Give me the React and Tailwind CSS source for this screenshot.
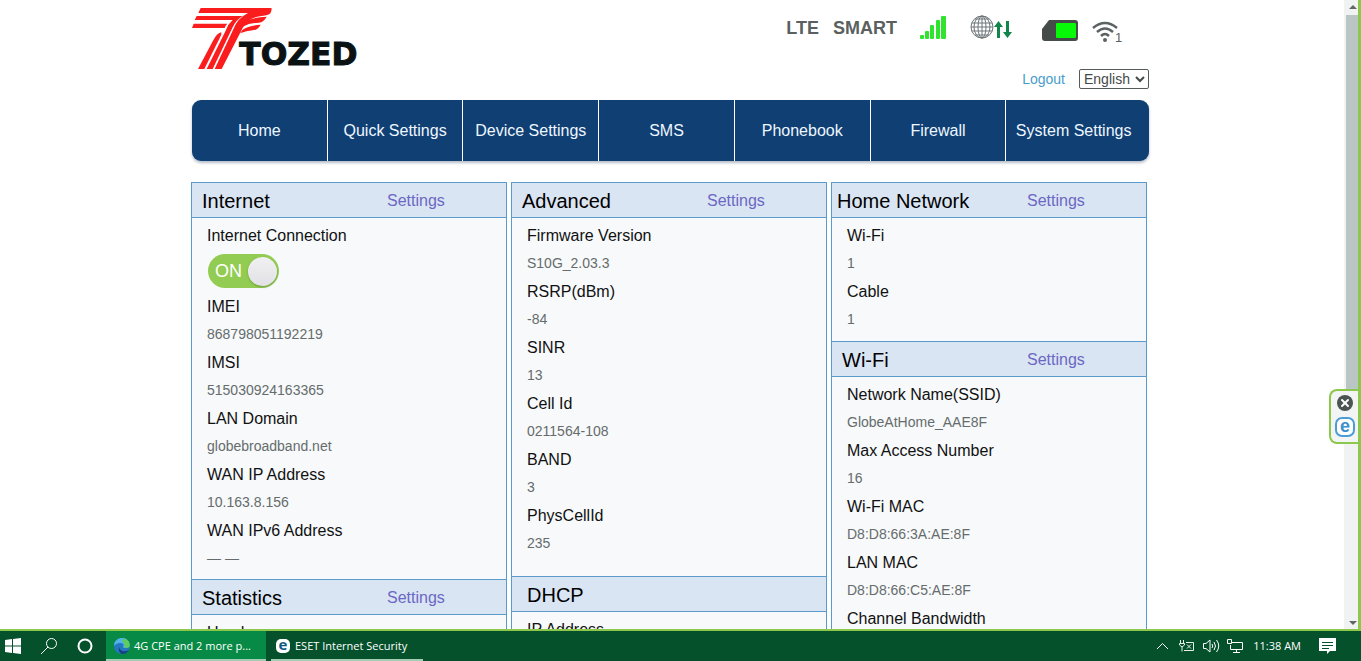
import { useState } from "react";
import { X } from "lucide-react";

const menu = ["Home", "Quick Settings", "Device Settings", "SMS", "Phonebook", "Firewall", "System Settings"];

const internet = [
  ["IMEI", "868798051192219"],
  ["IMSI", "515030924163365"],
  ["LAN Domain", "globebroadband.net"],
  ["WAN IP Address", "10.163.8.156"],
  ["WAN IPv6 Address", "— —"],
];

const advanced = [
  ["Firmware Version", "S10G_2.03.3"],
  ["RSRP(dBm)", "-84"],
  ["SINR", "13"],
  ["Cell Id", "0211564-108"],
  ["BAND", "3"],
  ["PhysCellId", "235"],
];

const homeNetwork = [
  ["Wi-Fi", "1"],
  ["Cable", "1"],
];

const wifi = [
  ["Network Name(SSID)", "GlobeAtHome_AAE8F"],
  ["Max Access Number", "16"],
  ["Wi-Fi MAC", "D8:D8:66:3A:AE:8F"],
  ["LAN MAC", "D8:D8:66:C5:AE:8F"],
  ["Channel Bandwidth"],
];

function Logo() {
  return (
    <svg viewBox="33 18 516 192" className="mt-[6px] h-16 w-[172px]" role="img" aria-label="Tozed">
      <g fill="#fb1d1d">
        <path d="M62 24H274Q276 26 273 36Q270 46 250 47Q205 50 188 84L125 207H104L160 88Q172 55 204 39H55Z" />
        <path d="M50 48H188Q168 60 158 82L98 207H80L138 90Q144 72 158 60H44Z" />
        <path d="M41 71H142Q136 76 134 84H36Z" />
        <path d="M124 97Q112 98 99 122L54 207H73L124 104Z" />
        <path d="M198 62Q225 52 260 50Q252 66 236 68Q208 69 188 80Q190 70 198 62Z" />
        <path d="M188 89Q205 77 242 74Q234 89 222 90Q198 92 180 100Z" />
      </g>
      <text x="178" y="196" fontFamily="'DejaVu Sans', sans-serif" fontWeight="700" fontSize="94" fill="#0b1214" stroke="#0b1214" strokeWidth="3">
        TOZED
      </text>
    </svg>
  );
}

function SignalIcon() {
  return (
    <svg viewBox="0 0 26 30" className="h-[30px] w-[26px]" fill="#2fe32f">
      <rect x="0" y="21" width="4" height="4" rx="1" />
      <rect x="5" y="17" width="4" height="8" rx="1" />
      <rect x="10" y="11" width="4" height="14" rx="1" />
      <rect x="16" y="6" width="4" height="19" rx="1" />
      <rect x="21" y="2" width="5" height="23" rx="1" />
    </svg>
  );
}

function GlobeIcon() {
  return (
    <svg viewBox="0 0 42 30" className="h-[30px] w-[42px]" fill="none">
      <g stroke="#6c7478">
        <circle cx="12" cy="13" r="11" />
        <ellipse cx="12" cy="13" rx="8" ry="11" />
        <ellipse cx="12" cy="13" rx="4" ry="11" />
        <path d="M12 2V24M1 13H23M2 9H22M2 17H22M5 5H19M5 21H19" />
      </g>
      <g fill="#12854a">
        <path d="M28.500 7L33 13H30V24H27V13H24Z" />
        <path d="M37.500 24L42 18H39V7H36V18H33Z" />
      </g>
    </svg>
  );
}

function SimIcon() {
  return (
    <svg viewBox="0 0 36 30" className="h-[30px] w-9">
      <path d="M7 6H33Q36 6 36 9V24Q36 27 33 27H3Q0 27 0 24V15Z" fill="#454b49" />
      <rect x="14" y="9" width="20" height="15" rx="1" fill="#06f906" />
    </svg>
  );
}

function WifiIcon() {
  return (
    <svg viewBox="0 0 31 30" className="h-[30px] w-[31px]" fill="none">
      <g stroke="#5b6262" strokeWidth="2.500">
        <path d="M1 14Q13 4 25 14" />
        <path d="M5 18Q13 11 21 18" />
        <path d="M9 22Q13 18 17 22" />
      </g>
      <circle cx="13" cy="26" r="2" fill="#5b6262" />
      <text x="23" y="28" fontSize="13" fontFamily="'Liberation Sans', Arial, sans-serif" fill="#5b6262">1</text>
    </svg>
  );
}

function PanelHeader({ title, indent = "pl-[10px]", link = true }) {
  return (
    <div className="flex h-9 items-center border-y border-[#5b9bcb] bg-[#dae5f3] pt-[2px]">
      <h2 className={`w-[195px] shrink-0 text-[20px] text-black ${indent}`}>{title}</h2>
      {link && (
        <a href="#settings" className="text-base text-[#6a68c4]">
          Settings
        </a>
      )}
    </div>
  );
}

function Rows({ items }) {
  return (
    <dl className="px-[15px]">
      {items.map(([label, value]) => (
        <div key={label}>
          <dt className="pt-[2px] text-base leading-[26px] text-[#111]">{label}</dt>
          {value && <dd className="text-sm leading-7 text-[#666c6c]">{value}</dd>}
        </div>
      ))}
    </dl>
  );
}

function StatusBar() {
  return (
    <div className="mt-[14px] flex items-start pr-[26px]">
      <span className="text-[18px] font-bold leading-7 text-[#5a6060]">LTE</span>
      <span className="ml-[14px] text-[18px] font-bold leading-7 text-[#5a6060]">SMART</span>
      <span className="ml-[23px]"><SignalIcon /></span>
      <span className="ml-6"><GlobeIcon /></span>
      <span className="ml-[30px]"><SimIcon /></span>
      <span className="ml-[14px]"><WifiIcon /></span>
    </div>
  );
}

function Scrollbar() {
  return (
    <div className="flex w-[14px] shrink-0 flex-col items-center bg-[#f1f2f2]">
      <svg viewBox="0 0 14 15" className="h-[15px] w-[14px]" fill="#606664">
        <path d="M5 9L9 5L13 9Z" />
      </svg>
      <div className="ml-[2px] h-[385px] w-3 bg-[#bac6c3]" />
      <svg viewBox="0 0 14 15" className="mt-auto h-[15px] w-[14px]" fill="#606664">
        <path d="M5 7L9 11L13 7Z" />
      </svg>
    </div>
  );
}

function SideWidget() {
  return (
    <div className="absolute right-[-1px] top-[389px] flex h-[55px] w-[30px] flex-col items-center justify-center gap-[6px] rounded-l-lg border-2 border-r-0 border-[#8cc84b] bg-[#f3f5f5] pb-[2px]">
      <button aria-label="Close" className="flex size-4 items-center justify-center rounded-full bg-[#4b5353] text-white">
        <X size={12} strokeWidth={4} />
      </button>
      <button aria-label="Open ESET" className="flex size-5 items-center justify-center rounded-[7px] border-2 border-[#4d9cd6] bg-white text-[18px] font-bold leading-none text-[#3f8fcc]">
        <span className="pb-[2px]">e</span>
      </button>
    </div>
  );
}

function Taskbar() {
  return (
    <footer className="flex h-[30px] shrink-0 items-stretch bg-[#04512b] font-['Open_Sans',sans-serif] text-[11px] text-white">
      <button aria-label="Start" className="flex w-[26px] items-center justify-center">
        <svg viewBox="0 0 16 16" className="size-4" fill="#fff">
          <path d="M0 2L7 1V7.500H0ZM8 1L16 0V7.500H8ZM0 8.500H7V15L0 14ZM8 8.500H16V16L8 15Z" />
        </svg>
      </button>
      <button aria-label="Search" className="ml-[14px] flex w-[18px] items-center justify-center">
        <svg viewBox="0 0 18 18" className="size-[18px]" fill="none" stroke="#fff">
          <circle cx="11.500" cy="6.500" r="5" />
          <path d="M8 10L1 17" />
        </svg>
      </button>
      <button aria-label="Cortana" className="ml-[19px] flex w-4 items-center justify-center">
        <svg viewBox="0 0 16 16" className="size-4" fill="none" stroke="#fff" strokeWidth="2">
          <circle cx="8" cy="8" r="6.500" />
        </svg>
      </button>
      <button className="ml-[13px] flex w-40 items-center gap-1 whitespace-nowrap border-b-2 border-[#a5cdb6] bg-[#078a45] pl-2 pt-[2px]">
        <svg viewBox="0 0 16 16" className="size-4 shrink-0">
          <circle cx="8" cy="8" r="8" fill="#2478bf" />
          <path d="M0 8A8 8 0 0 1 15 4Q16 7 14 9Q10 11 9 9Q11 5 6 5Q2 5 0 8Z" fill="#50b4e8" />
          <path d="M10 0.500A8 8 0 0 1 16 8Q15 10 13 10L10 9Q12 6 8 3Z" fill="#5fcb5c" />
          <path d="M5 9Q6 14 12 13Q14 13 15 12A8 8 0 0 1 8 16Q4 14 5 9Z" fill="#14437f" />
        </svg>
        4G CPE and 2 more p...
      </button>
      <button className="ml-[5px] flex w-[152px] items-center gap-[5px] whitespace-nowrap border-b-2 border-[#a5cdb6] pl-[5px] pt-[2px]">
        <span className="flex size-[14px] shrink-0 items-center justify-center rounded-[5px] bg-white text-[15px] font-bold leading-none text-[#0d5a86]">
          <span className="pb-[3px]">e</span>
        </span>
        ESET Internet Security
      </button>
      <div className="ml-auto flex items-center pr-[25px]">
        <svg viewBox="0 0 13 8" className="h-2 w-[13px]" fill="none" stroke="#fff">
          <path d="M1 7L6.500 1.500L12 7" />
        </svg>
        <svg viewBox="0 0 16 12" className="ml-[10px] h-3 w-4" fill="none" stroke="#e6efe9">
          <path d="M1.500 0V3M4.500 0V3M0.500 3.500H5.500V5L3 7L0.500 5ZM3 7V11.500" />
          <path d="M7 2.500H14.500V10.500H5M8 4.500L12 8.500M12 4.500L8 8.500" />
        </svg>
        <svg viewBox="0 0 17 14" className="ml-2 h-[14px] w-[17px]" fill="none" stroke="#fff">
          <path d="M0.500 4.500H3L7 1V13L3 9.500H0.500Z" />
          <path d="M9 5Q10.500 7 9 9M11 3Q14 7 11 11M13.500 1Q18 7 13.500 13" />
        </svg>
        <svg viewBox="0 0 16 14" className="ml-[7px] h-[14px] w-4" fill="none" stroke="#fff">
          <path d="M4 3.500H15.500V10.500H3.500V6M9.500 10.500V13.500M6 13.500H13M0.500 0.500H4.500V4.500H0.500Z" />
        </svg>
        <time className="ml-[10px]">11:38 AM</time>
        <svg viewBox="0 0 17 16" className="ml-[18px] h-4 w-[17px]">
          <path d="M0 0H17V13H11L8 16V13H0Z" fill="#fff" />
          <path d="M3 4.500H14M3 7.500H14M3 10.500H10" stroke="#04512b" />
        </svg>
      </div>
    </footer>
  );
}

export default function App() {
  const [connected, setConnected] = useState(true);
  const [language, setLanguage] = useState("English");

  return (
    <div className="flex h-screen flex-col overflow-hidden bg-white font-['Liberation_Sans',Arial,sans-serif]">
      <div className="relative flex min-h-0 flex-1 overflow-hidden border-b-2 border-r-[3px] border-[#8cc84b]">
        <main className="min-w-0 flex-1 overflow-hidden pr-1">
          <div className="mx-auto max-w-[958px]">
            <header className="flex h-[100px] justify-between">
              <Logo />
              <div className="flex flex-col items-end">
                <StatusBar />
                <div className="mt-[25px] flex items-center gap-[14px]">
                  <a href="#logout" className="text-[14px] leading-5 text-[#4a9bcb]">
                    Logout
                  </a>
                  <select
                    aria-label="Language"
                    value={language}
                    onChange={(e) => setLanguage(e.target.value)}
                    className="h-5 w-[70px] rounded-[2px] border border-[#555b5b] bg-white text-[14px] leading-4 text-[#444a4a]"
                  >
                    <option>English</option>
                  </select>
                </div>
              </div>
            </header>

            <nav className="ml-px flex h-[61px] overflow-hidden rounded-[9px] bg-[#103f74] pr-2 shadow-[0_2px_3px_#b5bdc9]">
              {menu.map((item, i) => (
                <a
                  key={item}
                  href="#menu"
                  className={`flex flex-1 items-center justify-center whitespace-nowrap text-base text-[#eef7ff] ${
                    i < menu.length - 1 ? "border-r border-white" : ""
                  }`}
                >
                  {item}
                </a>
              ))}
            </nav>

            <div className="mt-[21px] grid grid-cols-3 gap-1 pr-[2px]">
              <section className="border-x border-[#5b9bcb] bg-[#f7f9fb]">
                <PanelHeader title="Internet" />
                <div className="pb-[7px] pt-[3px]">
                  <p className="px-[15px] pt-[2px] text-base leading-[26px] text-[#111]">Internet Connection</p>
                  <div className="px-4 pb-1 pt-[5px]">
                    <label className="relative flex h-[34px] w-[71px] cursor-pointer items-center justify-between rounded-full bg-[#92cc52] pl-[7px] pr-[2px]">
                      <input
                        type="checkbox"
                        className="sr-only"
                        aria-label="Internet Connection"
                        checked={connected}
                        onChange={(e) => setConnected(e.target.checked)}
                      />
                      <span className="text-[18px] text-white">{connected ? "ON" : "OFF"}</span>
                      <span className="size-[29px] rounded-full bg-linear-to-b from-[#f0f0f2] to-[#e2e2e6] shadow-[0_1px_2px_#6d9a40]" />
                    </label>
                  </div>
                  <Rows items={internet} />
                </div>
                <PanelHeader title="Statistics" />
                <div className="pt-[3px]">
                  <Rows items={[["Used"]]} />
                </div>
              </section>

              <section className="border-x border-[#5b9bcb] bg-[#f7f9fb]">
                <PanelHeader title="Advanced" />
                <div className="pb-[19px] pt-[3px]">
                  <Rows items={advanced} />
                </div>
                <PanelHeader title="DHCP" indent="pl-[15px]" link={false} />
                <div className="pt-[3px]">
                  <Rows items={[["IP Address"]]} />
                </div>
              </section>

              <section className="border-x border-[#5b9bcb] bg-[#f7f9fb]">
                <PanelHeader title="Home Network" indent="pl-[5px]" />
                <div className="pb-2 pt-[3px]">
                  <Rows items={homeNetwork} />
                </div>
                <PanelHeader title="Wi-Fi" />
                <div className="pt-[3px]">
                  <Rows items={wifi} />
                </div>
              </section>
            </div>
          </div>
        </main>
        <Scrollbar />
        <SideWidget />
      </div>
      <Taskbar />
    </div>
  );
}
